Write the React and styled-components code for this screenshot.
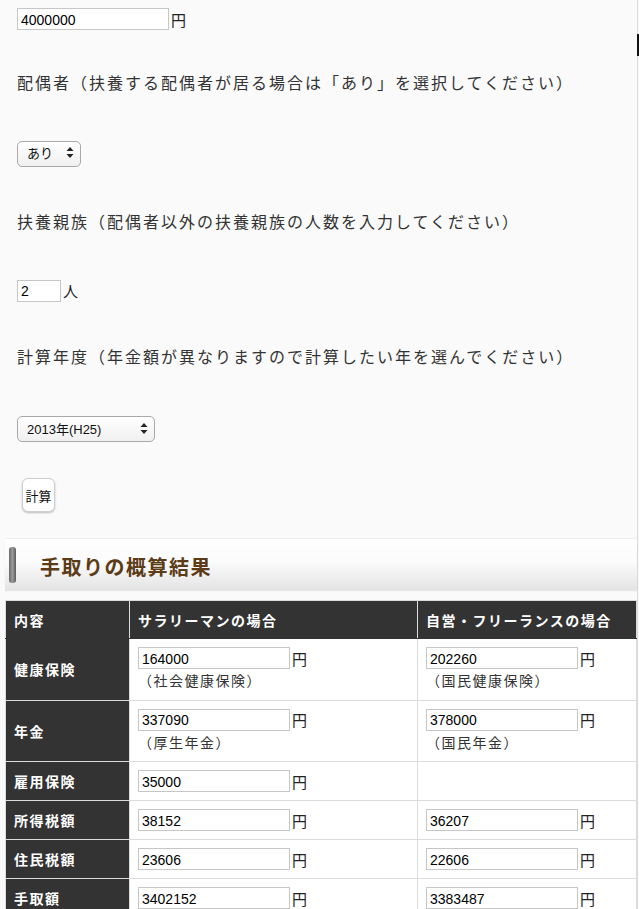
import React from 'react';
import styled, { createGlobalStyle } from 'styled-components';

const GlobalStyle = createGlobalStyle`
  html, body {
    margin: 0;
    padding: 0;
    background: #fafafa;
  }
  body {
    color: #333;
    font-family: "Noto Sans CJK JP", "Liberation Sans", sans-serif;
    overflow: hidden;
  }
`;

const Page = styled.div`
  width: 632px;
  padding-left: 5px;
  border-right: 1px solid #dcdcdc;
  min-height: 909px;
`;

const Form = styled.div`
  display: flex;
  flex-direction: column;
  align-items: flex-start;
  padding-left: 12px;
`;

const Row = styled.div`
  display: flex;
  align-items: center;
  margin-top: ${props => props.$gap}px;
`;

const Label = styled.p`
  margin: ${props => props.$gap}px 0 0;
  font-size: 16px;
  line-height: 24px;
  letter-spacing: 2px;
  color: #333;
  white-space: nowrap;
`;

const TextInput = styled.input`
  box-sizing: border-box;
  width: ${props => props.$width}px;
  height: 22px;
  margin: 0;
  padding: 1px 3px 0;
  border: 1px solid #c6c6c6;
  background: #fff;
  color: #000;
  font-family: "Liberation Sans", Arial, sans-serif;
  font-size: 14px;
  outline: none;
`;

const Unit = styled.span`
  margin-left: 2px;
  font-size: 15px;
  color: #222;
`;

const SelectWrap = styled.div`
  position: relative;
  margin-top: ${props => props.$gap}px;
`;

const Select = styled.select`
  appearance: none;
  box-sizing: border-box;
  width: ${props => props.$width}px;
  height: 26px;
  margin: 0;
  padding: 0 0 0 9px;
  border: 1px solid #a9a9a9;
  border-radius: 5px;
  background: linear-gradient(#ffffff, #f0f0f0);
  color: #111;
  font-family: "Liberation Sans", "Noto Sans CJK JP", sans-serif;
  font-size: 13px;
  outline: none;
`;

const Arrows = styled.svg`
  position: absolute;
  right: 7px;
  top: 8px;
  pointer-events: none;
`;

const Button = styled.button`
  box-sizing: border-box;
  width: 33px;
  height: 34px;
  margin: 36px 0 0 5px;
  padding: 0;
  border: 1px solid #cfcfcf;
  border-radius: 6px;
  background: #fff;
  box-shadow: 0 1px 2px rgba(0, 0, 0, 0.25);
  color: #111;
  font-family: "Noto Sans CJK JP", sans-serif;
  font-size: 13px;
`;

const Heading = styled.div`
  box-sizing: border-box;
  display: flex;
  align-items: center;
  height: 52px;
  margin-top: 26px;
  border-top: 1px solid #f0f0f0;
  background: linear-gradient(#ffffff 0%, #fbfbfb 45%, #e4e4e4 100%);
  box-shadow: 0 1px 1px rgba(0, 0, 0, 0.08);
`;

const HeadingMark = styled.span`
  width: 7px;
  height: 36px;
  margin-left: 4px;
  border-radius: 3px;
  background: linear-gradient(90deg, #6a6a6a, #9a9a9a 50%, #5a5a5a);
`;

const HeadingTitle = styled.h2`
  margin: 0 0 0 24px;
  padding-top: 4px;
  color: #5b3c17;
  font-size: 20px;
  font-weight: 700;
  letter-spacing: 1.5px;
`;

const Table = styled.table`
  width: 632px;
  margin-top: 10px;
  border-collapse: collapse;
  background: #fff;
  table-layout: fixed;

  td, th {
    border: 1px solid #dcdcdc;
  }
`;

const HeadCell = styled.th`
  height: 37px;
  padding: 0 0 0 8px;
  background: #333;
  color: #fff;
  font-size: 14px;
  font-weight: 700;
  text-align: left;
  letter-spacing: 1.5px;
  border-color: #dcdcdc #dcdcdc #333 !important;
`;

const RowHead = styled.th`
  padding: 0 0 0 8px;
  background: #333;
  color: #fff;
  font-size: 14px;
  font-weight: 700;
  text-align: left;
  letter-spacing: 1.5px;
`;

const Cell = styled.td`
  height: ${props => (props.$tall ? 60.5 : 38)}px;
  padding: 0 0 0 8px;
  vertical-align: ${props => (props.$tall ? 'top' : 'middle')};
`;

const CellInner = styled.div`
  padding-top: ${props => (props.$tall ? 8 : 0)}px;
`;

const Note = styled.div`
  margin-top: 1px;
  font-size: 14px;
  line-height: 20px;
  letter-spacing: 1.5px;
  color: #333;
`;

const ScrollThumb = styled.div`
  position: fixed;
  top: 34px;
  right: 0;
  width: 2px;
  height: 22px;
  background: #111;
`;

function SelectBox({ width, gap, options }) {
  return (
    <SelectWrap $gap={gap}>
      <Select $width={width} defaultValue={options[0]}>
        {options.map(o => (
          <option key={o}>{o}</option>
        ))}
      </Select>
      <Arrows width="8" height="11" viewBox="0 0 8 11">
        <path d="M4 0 L7.5 4 H0.5 Z M4 11 L7.5 7 H0.5 Z" fill="#222" />
      </Arrows>
    </SelectWrap>
  );
}

function AmountCell({ value, note }) {
  if (value === undefined) return <Cell $tall={!!note} />;
  return (
    <Cell $tall={!!note}>
      <CellInner $tall={!!note}>
        <Row $gap={0}>
          <TextInput $width={152} defaultValue={value} />
          <Unit>円</Unit>
        </Row>
        {note && <Note>{note}</Note>}
      </CellInner>
    </Cell>
  );
}

const rows = [
  { label: '健康保険', a: '164000', an: '（社会健康保険）', b: '202260', bn: '（国民健康保険）' },
  { label: '年金', a: '337090', an: '（厚生年金）', b: '378000', bn: '（国民年金）' },
  { label: '雇用保険', a: '35000' },
  { label: '所得税額', a: '38152', b: '36207' },
  { label: '住民税額', a: '23606', b: '22606' },
  { label: '手取額', a: '3402152', b: '3383487' }
];

export default function App() {
  return (
    <Page>
      <GlobalStyle />
      <Form>
        <Row $gap={8}>
          <TextInput $width={152} defaultValue="4000000" />
          <Unit>円</Unit>
        </Row>
        <Label $gap={40}>配偶者（扶養する配偶者が居る場合は「あり」を選択してください）</Label>
        <SelectBox width={64} gap={45} options={['あり', 'なし']} />
        <Label $gap={42}>扶養親族（配偶者以外の扶養親族の人数を入力してください）</Label>
        <Row $gap={47}>
          <TextInput $width={44} defaultValue="2" />
          <Unit>人</Unit>
        </Row>
        <Label $gap={42}>計算年度（年金額が異なりますので計算したい年を選んでください）</Label>
        <SelectBox width={138} gap={47} options={['2013年(H25)', '2012年(H24)']} />
        <Button>計算</Button>
      </Form>
      <Heading>
        <HeadingMark />
        <HeadingTitle>手取りの概算結果</HeadingTitle>
      </Heading>
      <Table>
        <colgroup>
          <col style={{ width: 124 }} />
          <col style={{ width: 288 }} />
          <col />
        </colgroup>
        <thead>
          <tr>
            <HeadCell>内容</HeadCell>
            <HeadCell>サラリーマンの場合</HeadCell>
            <HeadCell>自営・フリーランスの場合</HeadCell>
          </tr>
        </thead>
        <tbody>
          {rows.map(r => (
            <tr key={r.label}>
              <RowHead>{r.label}</RowHead>
              <AmountCell value={r.a} note={r.an} />
              <AmountCell value={r.b} note={r.bn} />
            </tr>
          ))}
        </tbody>
      </Table>
      <ScrollThumb />
    </Page>
  );
}
